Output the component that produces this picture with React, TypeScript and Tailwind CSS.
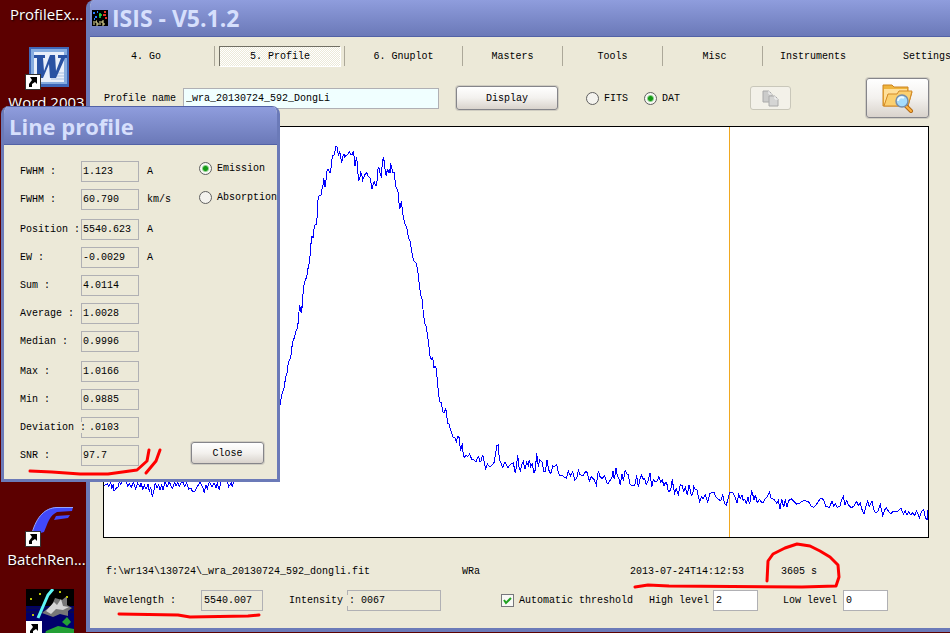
import { useState } from "react";
import type { ReactNode } from "react";
import clsx from "clsx";

type Segment = { x: number; y: number; points: string };

// Spectrum samples, in thirds of a plot unit from each segment's origin
const SEGMENTS: Segment[] = [
  {
    x: 90,
    y: 460,
    points:
      "40,78 52,72 56,80 62,66 65,84 70,75 72,94 78,85 84,82 88,66 92,74 97,60 108,62 113,78 118,70 124,82 130,66 137,88 143,70 150,80 154,68 158,90 163,74 168,88 174,72 178,94 182,82 187,110 192,90 196,68 201,84 206,74 210,90 215,76 219,90 225,66 231,80 238,66 247,86 254,68 258,78 263,66 268,80 274,68 280,66 283,80 290,68 296,88 302,84 308,95 314,95 322,80 330,66 338,82 343,98 348,74 352,86 358,66 366,80 372,68 378,84 382,70 388,90 393,60 408,58 412,66 416,80 424,68 427,80 432,60",
  },
  {
    x: 270,
    y: 130,
    points:
      "31,822 34,803 37,788 41,780 43,768 47,742 51,728 53,710 58,690 62,684 65,655 69,633 74,620 78,604 82,594 85,575 87,545 89,526 92,545 95,528 95,548 98,500 101,470 105,454 110,440 113,420 117,402 120,380 122,350 125,320 130,322 132,298 136,283 140,282 142,250 143,215 147,198 153,195 156,178 159,165 161,145 165,170 168,150 170,126 174,118 180,130 184,110 187,78 193,74 197,50 201,50 203,65 206,76 209,64 212,82 215,100 218,80 222,72 224,82 229,76 234,72 238,64 242,72 247,72 250,64 253,84 255,108 260,80 263,120 266,154 270,140 272,128 275,134 278,150 283,138 286,132 290,128 294,138 300,144 303,160 306,176 309,164 313,156 318,168 322,150 324,118 326,110 330,130 334,138 337,100 340,80 343,96 346,124 349,138 352,118 355,130 358,118 360,130 362,100 365,114 368,126 372,126 375,150 378,172 383,180 386,200 388,236 391,232 394,214 397,236 400,262 404,280 410,292 413,310 417,328 421,334 423,350 427,375 432,394 438,398 441,410 444,430 447,455 450,480 454,502 457,510 460,550 464,580 469,590 473,620 477,650 481,684 485,688 488,684 492,714 495,708 499,715 502,750 505,785 509,815 514,818 518,845 522,850 527,836 530,848",
  },
  {
    x: 420,
    y: 370,
    points:
      "82,160 88,162 91,178 96,192 99,202 105,204 109,216 113,200 118,202 121,240 124,236 127,220 130,255 133,262 138,256 143,260 149,252 155,268 162,269 168,277 173,262 176,260 180,276 184,272 187,256 190,258 193,280 197,295 202,282 208,290 214,287 222,278 227,250 231,226 235,224 238,268 242,278 248,292 255,276 263,293 271,284 280,278 286,310 289,294 293,256 297,292 301,302 306,282 310,274 315,298 320,276 325,286 328,270 332,290 337,282 342,308 346,300 350,250 355,290 359,270 366,276 372,306 376,304 381,270 386,300 392,311 398,288 404,290 410,283 414,304 419,316 427,317 433,321 439,325 445,302 451,318 458,304 464,331 470,326 475,300 480,314 488,318 497,304 502,308 508,333 514,320 522,328 529,345 535,303 540,320 546,326 554,318 560,338 565,341 571,330 576,322 579,304 583,328 588,294 592,318 597,328 601,344 606,312 610,332 616,299 620,312 625,314 629,340 634,346 644,346 650,316 655,350 660,328 665,314 670,328 674,326 679,344 685,330 690,308 695,352 700,330 706,336 712,332 716,320 722,336 727,330 732,348 736,338 740,338 745,366 752,360 757,326 760,350 764,370 769,356 775,374 781,344 786,346 791,364 796,352 802,376 807,346",
  },
  {
    x: 680,
    y: 440,
    points:
      "28,136 31,152 34,166 38,162 41,140 46,148 51,150 55,170 59,185 64,170 70,176 76,164 83,185 90,160 97,158 102,156 106,168 113,176 122,182 128,164 134,192 139,196 144,176 150,156 158,158 165,172 171,190 176,164 181,174 186,166 190,182 194,178 199,190 204,172 208,190 212,184 214,150 218,162 222,180 226,164 232,188 238,178 244,186 250,188 256,176 262,170 268,156 274,176 282,178 290,190 295,182 300,208 305,178 311,202 316,178 321,202 326,182 334,176 342,184 350,192 358,190 366,184 374,182 386,186 393,198 400,202 408,196 415,184 422,175 430,178 438,200 448,202 456,184 461,198 467,192 472,202 480,198 485,180 490,170 495,194 500,182 506,196 514,204 522,198 530,184 535,196 541,188 547,212 552,222 558,198 563,184 568,200 576,184 582,210 588,220 594,212 601,194 608,226 614,210 620,204 626,216 632,222 640,214 646,216 656,212 663,204 670,222 676,212 681,226 686,216 692,224 698,218 704,226 710,212 718,234 726,212 731,208 736,232 741,240 744,210",
  },
];

const TRACE = SEGMENTS.map(({ x, y, points }) =>
  points
    .split(" ")
    .map((p) => {
      const [px, py] = p.split(",").map(Number);
      return `${(x + px / 3).toFixed(1)},${(y + py / 3).toFixed(1)}`;
    })
    .join(" ")
).join(" ");

const TABS = [
  { label: "4. Go", className: "w-[125px] pr-3 border-r" },
  { label: "5. Profile", className: "w-[130px] border-r" },
  { label: "6. Gnuplot", className: "w-[118px] border-r" },
  { label: "Masters", className: "w-[100px] border-r" },
  { label: "Tools", className: "w-[100px] border-r" },
  { label: "Misc", className: "w-[100px] pl-1 border-r" },
  { label: "Instruments", className: "w-[100px]" },
  { label: "Settings", className: "w-[128px]" },
];

const MEASURES = [
  [
    { id: "fwhm-a", label: "FWHM :", value: "1.123", unit: "A" },
    { id: "fwhm-km", label: "FWHM :", value: "60.790", unit: "km/s" },
  ],
  [
    { id: "position", label: "Position :", value: "5540.623", unit: "A" },
    { id: "ew", label: "EW :", value: "-0.0029", unit: "A" },
    { id: "sum", label: "Sum :", value: "4.0114" },
    { id: "average", label: "Average :", value: "1.0028" },
    { id: "median", label: "Median :", value: "0.9996" },
  ],
  [
    { id: "max", label: "Max :", value: "1.0166" },
    { id: "min", label: "Min :", value: "0.9885" },
    { id: "deviation", label: "Deviation :", value: ".0103" },
    { id: "snr", label: "SNR :", value: "97.7" },
  ],
];

const button =
  "flex items-center justify-center rounded-[3px] border border-[#85858a] bg-linear-to-b from-white via-[#f3f1ee] to-[#d9d3cc] shadow-[0_0_0_1px_#d0cdc2]";
const readout = "h-[21px] border border-[#b0b0b4] bg-[#ece9d8]";

function Radio({
  name,
  label,
  checked,
  onChange,
}: {
  name: string;
  label: string;
  checked: boolean;
  onChange: () => void;
}) {
  return (
    <label className="flex items-center gap-[5px] whitespace-nowrap">
      <input
        type="radio"
        name={name}
        checked={checked}
        onChange={onChange}
        className="size-[13px] shrink-0 appearance-none rounded-full border border-[#606060] bg-[#f4f3ee] checked:bg-[radial-gradient(circle,#159a15_0_2px,#8fd08f_3px,#f8f8f4_4px)]"
      />
      {label}
    </label>
  );
}

function ShortcutArrow() {
  return (
    <svg viewBox="0 0 16 16" className="absolute -left-1 bottom-0 size-4" aria-hidden="true">
      <rect x=".5" y=".5" width="15" height="15" fill="#fff" stroke="#333" />
      <path d="M5 3h7v7l-2-2-3 2v3H4v-3l3-4z" fill="#000" />
    </svg>
  );
}

function DesktopIcon({ label, children }: { label: string; children?: ReactNode }) {
  return (
    <div className="flex w-[93px] flex-col items-center gap-0.5">
      {children}
      <span className="h-5 whitespace-nowrap text-[15px] leading-5 text-white [text-shadow:1px_1px_2px_#000]">
        {label}
      </span>
    </div>
  );
}

function Desktop() {
  return (
    <div className="flex w-[93px] flex-col pt-1 font-['Open_Sans','Noto_Sans',sans-serif]">
      <DesktopIcon label="ProfileEx..." />
      <div className="mt-[23px]">
        <DesktopIcon label="Word 2003">
          <div className="relative ml-1 h-[43px] w-10">
            <svg viewBox="0 0 40 40" className="size-10" aria-hidden="true">
              <rect width="40" height="40" fill="#3f68b8" />
              <rect x="2" y="2" width="36" height="35" fill="#86acdf" />
              <path d="M5 5h30v30H5z" fill="#e8effa" />
              <path d="M22 26h13M24 29h11M22 32h13" stroke="#a9bfe2" />
              <path
                d="M5 8h11v3h-2l1 13 6-16h5l1 16 5-13h-3V8h9v3h-2l-9 20h-6l-1-14-6 14h-6L8 11H5z"
                fill="#2952a3"
              />
            </svg>
            <ShortcutArrow />
          </div>
        </DesktopIcon>
      </div>
      <div className="mt-[395px]">
        <DesktopIcon label="BatchRen...">
          <div className="relative ml-2 h-10 w-11">
            <svg viewBox="0 0 44 40" className="h-10 w-11" aria-hidden="true">
              <path d="M3 26C8 9 16 1 28 0h16l-1 4-15 1c-8 4-9 11-13 20l-7 2z" fill="#4148fa" />
              <path d="M3 26C8 9 16 1 28 .5h16" fill="none" stroke="#94a4ff" />
              <path d="M27 9l14-1-2 3-14 2z" fill="#4148fa" />
            </svg>
            <ShortcutArrow />
          </div>
        </DesktopIcon>
      </div>
      <div className="mt-5 pl-[26px]">
        <svg viewBox="0 0 48 48" className="size-12" aria-hidden="true">
          <rect width="48" height="48" fill="#000" />
          <path d="M0 17h48v31H0z" fill="#00006c" />
          <path d="M0 19h48M0 23h48" stroke="#101038" />
          <path d="M16 24l10-8 3-7 7 2 5-4v9l5 3-4 3v5l-8-2-7 3z" fill="#777" />
          <path d="M20 22l8-9 3 3 4-6 2 7 6 1-6 3-7-1-5 5z" fill="#d4d4d4" />
          <path d="M12 29L22 6l5-6" stroke="#5ff5f5" strokeWidth="3" fill="none" />
          <path d="M4 10h2M13 5h2M33 3h2M40 8h2M6 26h2" stroke="#b9c20a" strokeWidth="2" />
          <path d="M36 33l5-5 4 5-4 4zM20 42l12-5 16 3v8H18z" fill="#23a035" />
          <rect y="32" width="16" height="16" fill="#fff" />
          <path d="M5 35h7v7l-2-2-3 2v3H4v-3l3-4z" fill="#000" />
        </svg>
      </div>
    </div>
  );
}

function FolderSearch() {
  return (
    <svg viewBox="0 0 32 30" className="h-[30px] w-8" aria-hidden="true">
      <path d="M1 23V2h9l2 2h14v5h4l-4 14z" fill="#efb43d" stroke="#cc8421" />
      <path d="M2 22V6h23v5H6z" fill="#ffe09a" />
      <path d="M2 23l4-12h9l2-3h13l-4 15z" fill="#fbd070" stroke="#d38b28" />
      <path d="M23 22l6 6" stroke="#b36a14" strokeWidth="4" strokeLinecap="round" />
      <path d="M24 23l5 5" stroke="#ffb340" strokeWidth="2" strokeLinecap="round" />
      <circle cx="20" cy="18" r="6" fill="#a5dcfc" stroke="#768daa" strokeWidth="1.5" />
      <path d="M16 18c0-3 3-5 6-3" fill="none" stroke="#effaff" strokeWidth="2" />
    </svg>
  );
}

function CopyIcon() {
  return (
    <svg viewBox="0 0 17 17" className="size-[17px]" aria-hidden="true">
      <path d="M1 1h6l3 3v8H1z" fill="#cbcbca" stroke="#aaa" />
      <path d="M7 6h6l3 3v7H7z" fill="#d5d5d4" stroke="#aaa" />
      <path d="M7 1v3h3M13 6v3h3" fill="none" stroke="#f4f4f4" />
    </svg>
  );
}

function MainWindow() {
  const [format, setFormat] = useState("DAT");
  const [auto, setAuto] = useState(true);

  return (
    <section className="absolute top-0 right-0 left-[86px] overflow-hidden rounded-tl-lg border-b-4 border-l-4 border-[#6b7ab8] bg-[#ece9d8]">
      <header className="flex h-[37px] items-center gap-1 border-b border-[#5262a6] bg-linear-to-b from-[#8f9ddd] to-[#6b79b8] pl-0.5">
        <svg viewBox="0 0 16 16" className="size-4" aria-hidden="true">
          <rect width="16" height="16" fill="#000" />
          <path d="M1 3h2M3 7h2M5 2h1M2 9h1" stroke="#287cff" strokeWidth="2" />
          <path d="M7 5h3M8 3v5" stroke="#20df50" strokeWidth="1.5" />
          <path d="M12 2h2M11 5h3M13 8h2" stroke="#e33225" strokeWidth="2" />
          <path d="M2 11v4M5 11h-1v2h2v2H4M8 11v4M12 11h-2v2h2v2h-2" fill="none" stroke="#eee8a0" />
        </svg>
        <h1 className="font-['Open_Sans','Noto_Sans',sans-serif] text-[23px] font-bold text-[#d6dffc]">
          ISIS - V5.1.2
        </h1>
      </header>

      <nav className="flex h-[29px] pt-[9px]">
        {TABS.map((tab) => (
          <div
            key={tab.label}
            className={clsx("flex h-5 shrink-0 items-center justify-center border-[#aca899]", tab.className)}
          >
            <button
              className={clsx(
                tab.label === "5. Profile" &&
                  "h-5 w-[121px] border-t border-l border-[#716f64] bg-[repeating-conic-gradient(#ffffff_0_25%,#ece9d8_0_50%)] bg-[length:2px_2px] shadow-[1px_1px_0_#fff]"
              )}
            >
              {tab.label}
            </button>
          </div>
        ))}
      </nav>

      <div className="mt-3 mr-[21px] flex h-10 items-center pl-[14px]">
        <label htmlFor="profile-name" className="w-[79px]">
          Profile name
        </label>
        <input
          id="profile-name"
          defaultValue="_wra_20130724_592_DongLi"
          className="h-[21px] w-64 border border-[#b0b0b4] bg-[#f0ffff] pl-0.5"
        />
        <button className={clsx(button, "ml-[17px] h-6 w-[102px]")}>Display</button>
        <div className="ml-7 flex gap-4">
          <Radio name="format" label="FITS" checked={format === "FITS"} onChange={() => setFormat("FITS")} />
          <Radio name="format" label="DAT" checked={format === "DAT"} onChange={() => setFormat("DAT")} />
        </div>
        <button
          disabled
          aria-label="Copy"
          className="ml-[70px] flex h-6 w-[41px] items-center justify-center rounded-[3px] border border-[#c9c7ba] bg-[#f3f1e9]"
        >
          <CopyIcon />
        </button>
        <button aria-label="Browse" className={clsx(button, "ml-auto h-10 w-[63px]")}>
          <FolderSearch />
        </button>
      </div>

      <div className="mt-2 mr-[21px] ml-[13px] border border-black bg-white">
        <svg
          viewBox="104 127 824 410"
          preserveAspectRatio="none"
          className="block h-[410px] w-full"
          shapeRendering="crispEdges"
        >
          <path d="M729.5 126V538" stroke="#f0a820" />
          <polyline points={TRACE} fill="none" stroke="#0000ff" />
        </svg>
      </div>

      <div className="flex pt-[26px] pl-4 leading-4">
        <span className="w-[356px]">f:\wr134\130724\_wra_20130724_592_dongli.fit</span>
        <span className="w-[168px]">WRa</span>
        <span className="w-[151px]">2013-07-24T14:12:53</span>
        <span>3605 s</span>
      </div>

      <div className="flex items-center pt-2.5 pb-[17px] pl-[14px]">
        <label htmlFor="wavelength" className="w-[97px]">
          Wavelength :
        </label>
        <input id="wavelength" readOnly defaultValue="5540.007" className={clsx(readout, "w-[62px] pl-0.5")} />
        <label htmlFor="intensity" className="relative ml-[26px] w-[58px] whitespace-nowrap">
          <span className="bg-[#ece9d8]">Intensity :</span>
        </label>
        <input id="intensity" readOnly defaultValue="0067" className={clsx(readout, "w-[94px] pl-[13px]")} />
        <label className="relative ml-[60px] flex items-center gap-[5px]">
          <input
            type="checkbox"
            checked={auto}
            onChange={() => setAuto(!auto)}
            className="size-[13px] appearance-none border border-[#77777c] bg-[#f8f8f5]"
          />
          {auto && (
            <svg viewBox="0 0 13 13" className="pointer-events-none absolute left-0 size-[13px]" aria-hidden="true">
              <path d="M3 6l2 3 5-5" fill="none" stroke="#21a121" strokeWidth="2" />
            </svg>
          )}
          Automatic threshold
        </label>
        <label htmlFor="high" className="ml-4 w-16">
          High level
        </label>
        <input id="high" defaultValue="2" className="h-[21px] w-[45px] border border-[#b0b0b4] bg-white pl-0.5" />
        <label htmlFor="low" className="ml-[25px] w-[60px]">
          Low level
        </label>
        <input id="low" defaultValue="0" className="h-[21px] w-[45px] border border-[#b0b0b4] bg-white pl-0.5" />
      </div>
    </section>
  );
}

function LineProfile() {
  const [line, setLine] = useState("Emission");

  return (
    <section
      role="dialog"
      aria-label="Line profile"
      className="absolute top-[106px] left-px w-[279px] overflow-hidden rounded-t-lg border-x-3 border-b-3 border-[#6b7ab8] bg-[#ece9d8]"
    >
      <header className="-mx-[3px] flex h-[39px] items-center border-t border-b border-[#5262a6] bg-linear-to-b from-[#8f9ddd] to-[#6b79b8] pt-0.5 pl-2">
        <h2 className="font-['Open_Sans','Noto_Sans',sans-serif] text-[22px] font-bold text-[#d6dffc]">
          Line profile
        </h2>
      </header>
      <div className="flex justify-between pt-4 pb-[13px] pl-4">
        <div className="flex flex-col gap-[9px]">
          {MEASURES.map((group) => (
            <div key={group[0].id} className="flex flex-col gap-[7px]">
              {group.map((m) => (
                <div key={m.id} className="flex items-center">
                  <label htmlFor={m.id} className="relative w-[61px] whitespace-nowrap">
                    <span className="bg-[#ece9d8]">{m.label}</span>
                  </label>
                  <input
                    id={m.id}
                    readOnly
                    defaultValue={m.value}
                    className={clsx(readout, "w-[58px]", m.id === "deviation" ? "pl-[7px]" : "pl-px")}
                  />
                  {m.unit && <span className="pl-2">{m.unit}</span>}
                </div>
              ))}
            </div>
          ))}
        </div>
        <div className="flex w-[78px] flex-col justify-between pb-0.5">
          <div className="flex flex-col gap-3.5">
            <Radio name="line" label="Emission" checked={line === "Emission"} onChange={() => setLine("Emission")} />
            <Radio
              name="line"
              label="Absorption"
              checked={line === "Absorption"}
              onChange={() => setLine("Absorption")}
            />
          </div>
          <button className={clsx(button, "-ml-2 h-[22px] w-[73px]")}>Close</button>
        </div>
      </div>
    </section>
  );
}

// Red pen marks drawn over both windows
function PenMarks() {
  return (
    <svg
      viewBox="0 0 950 633"
      className="pointer-events-none absolute top-0 left-0 h-[633px] w-[950px]"
      fill="none"
      stroke="#ff0000"
      strokeWidth="3"
      strokeLinecap="round"
      strokeLinejoin="round"
      aria-hidden="true"
    >
      <path d="M30 471L52 472 80 474 108 474 137 470 147 461 149 450" />
      <path d="M160 450L156 461 146 473" />
      <path d="M119 614L178 615 190 617 248 616 259 615" />
      <path d="M635 587L648 585 669 586 802 587 836 586 839 577 838 565 830 557 820 551 810 546 797 544 785 548 773 554 768 561 767 581" />
    </svg>
  );
}

export default function App() {
  return (
    <main className="relative min-h-screen overflow-hidden bg-[#5c0000] font-['Liberation_Mono',monospace] text-[10px] text-black">
      <Desktop />
      <MainWindow />
      <LineProfile />
      <PenMarks />
    </main>
  );
}
